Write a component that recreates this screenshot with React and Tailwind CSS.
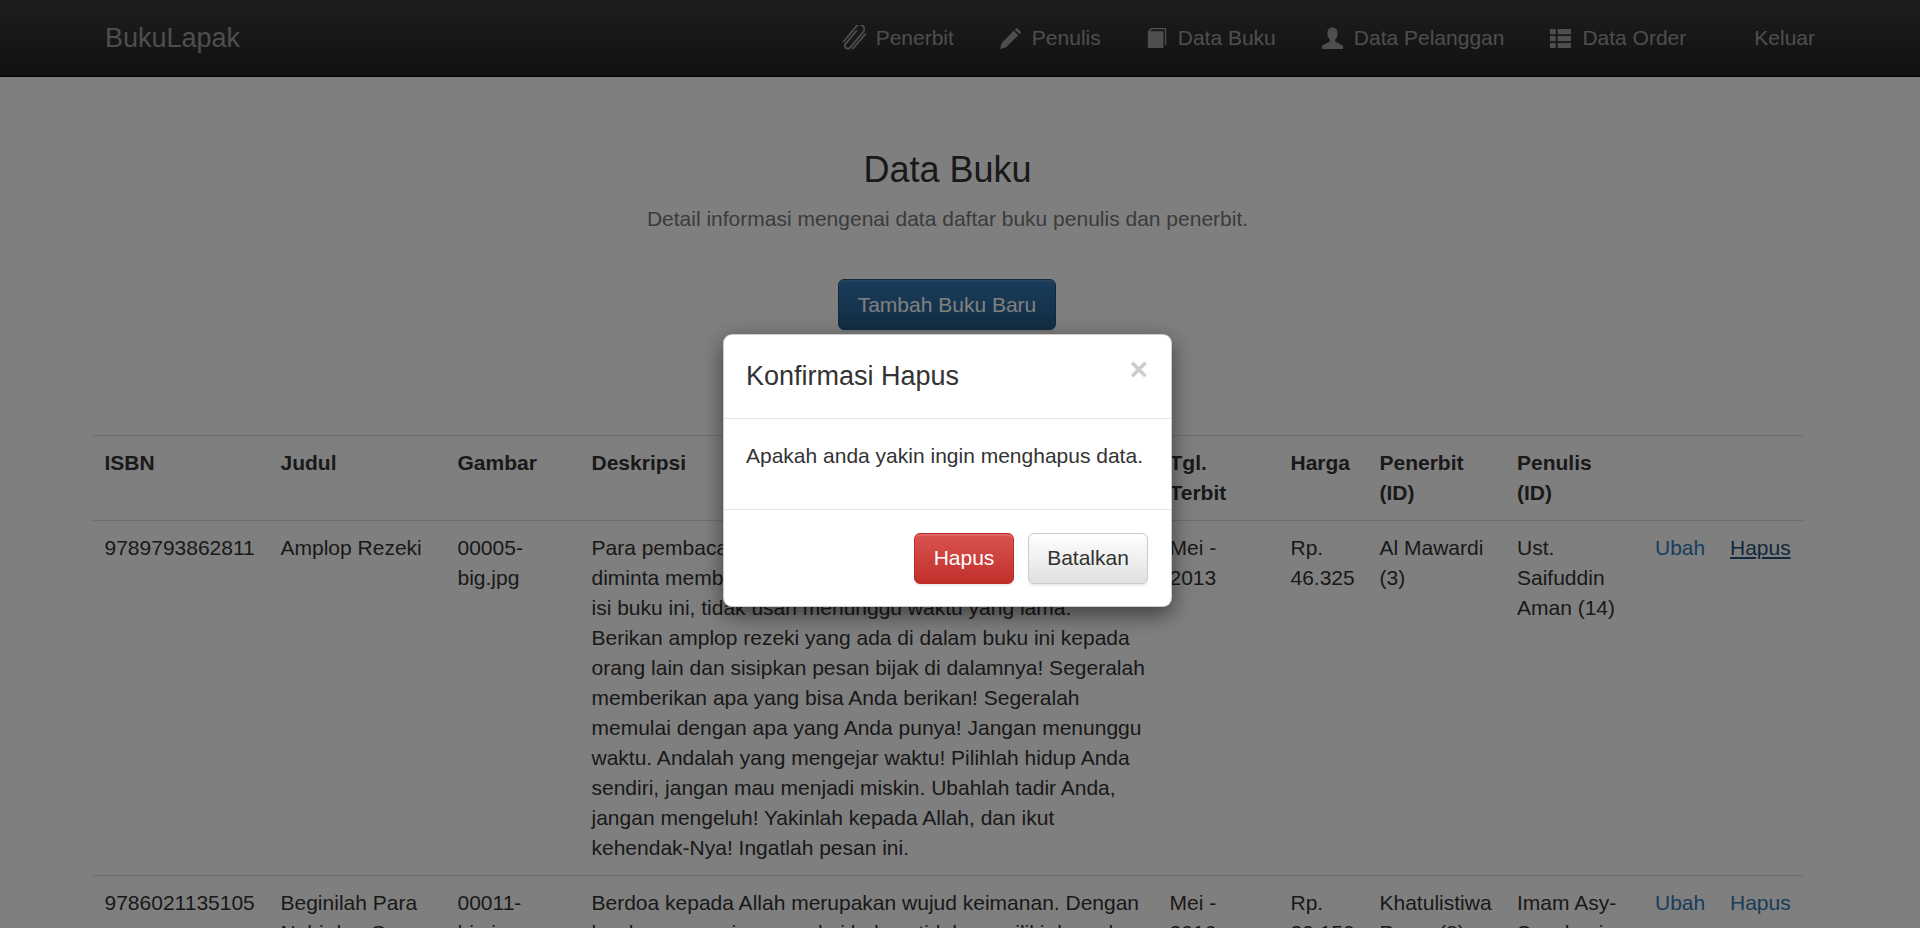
import React from "react";

const PaperclipIcon = () => (
  <svg viewBox="1.500 1.500 21 21" className="-ml-[2px] -mr-[1px] w-[26px] h-[26px]" fill="none" stroke="currentColor" strokeWidth="1.450" strokeLinecap="round">
    <g transform="rotate(40 12 12)">
      <path d="M9.8 6.5V20a2.4 2.4 0 0 0 4.8 0V3.500a3.600 3.600 0 0 0-7.200 0V19.500" />
      <path d="M16.900 4v15" />
    </g>
  </svg>
);

const PencilIcon = () => (
  <svg viewBox="0 0 24 24" className="w-[23px] h-[23px]" fill="currentColor">
    <path d="M1 23l1.8-6.4L15.4 4l4.6 4.6L7.400 21.200z" />
    <path d="M16.600 2.800l2-2 4.600 4.600-2 2z" />
  </svg>
);

const BookIcon = () => (
  <svg viewBox="0 0 24 24" className="w-[22px] h-[22px]" fill="currentColor">
    <path d="M2 4.500L5.500 1H22v18.500h-1.400V2.400H6.300L4.800 4.500H19V23H2z" />
  </svg>
);

const UserIcon = () => (
  <svg viewBox="0 0 24 24" className="w-[23px] h-[23px]" fill="currentColor">
    <path d="M12 .5c-3.600 0-5.300 2.600-5.300 6.200 0 2.600 1 5.100 2.500 6.500v1.800L1 19.500V23h22v-3.500l-8.200-4.500v-1.800c1.500-1.400 2.500-3.900 2.500-6.500C17.300 3.100 15.600.5 12 .5z" />
  </svg>
);

const ListIcon = () => (
  <svg viewBox="0 0 24 24" className="w-[23px] h-[23px]" fill="currentColor">
    <path d="M1 2h6v5.500H1zM9 2h14v5.500H9zM1 9.300h6v5.500H1zM9 9.300h14v5.500H9zM1 16.600h6V22H1zM9 16.600h14V22H9z" />
  </svg>
);

const navItems = [
  { label: "Penerbit", icon: <PaperclipIcon /> },
  { label: "Penulis", icon: <PencilIcon /> },
  { label: "Data Buku", icon: <BookIcon /> },
  { label: "Data Pelanggan", icon: <UserIcon /> },
  { label: "Data Order", icon: <ListIcon /> },
];

const rows = [
  {
    isbn: "9789793862811",
    judul: "Amplop Rezeki",
    gambar: "00005-big.jpg",
    deskripsi:
      "Para pembaca yang dirahmati Allah, setelah buku selesai diminta memberikan amplop kepada banyak orang. Maka isi buku ini, tidak usah menunggu waktu yang lama. Berikan amplop rezeki yang ada di dalam buku ini kepada orang lain dan sisipkan pesan bijak di dalamnya! Segeralah memberikan apa yang bisa Anda berikan! Segeralah memulai dengan apa yang Anda punya! Jangan menunggu waktu. Andalah yang mengejar waktu! Pilihlah hidup Anda sendiri, jangan mau menjadi miskin. Ubahlah tadir Anda, jangan mengeluh! Yakinlah kepada Allah, dan ikut kehendak-Nya! Ingatlah pesan ini.",
    terbit: "Mei - 2013",
    harga: "Rp. 46.325",
    penerbit: "Al Mawardi (3)",
    penulis: "Ust. Saifuddin Aman (14)",
    hover: true,
  },
  {
    isbn: "9786021135105",
    judul: "Beginilah Para Nabi dan Orang Saleh Berdoa",
    gambar: "00011-big.jpg",
    deskripsi:
      "Berdoa kepada Allah merupakan wujud keimanan. Dengan berdoa, manusia mengakui bahwa tidak memiliki daya dan upaya selain dari pertolongan Allah.",
    terbit: "Mei - 2016",
    harga: "Rp. 39.150",
    penerbit: "Khatulistiwa Press (8)",
    penulis: "Imam Asy-Syaukani (1)",
  },
];

const App = () => {
  return (
    <div className="relative h-[928px] w-[1920px] overflow-hidden bg-white text-[21px] leading-[30px] text-[#333] font-['Liberation_Sans',Arial,sans-serif]">
      {/* Navbar */}
      <nav className="flex h-[77px] items-center border-b border-[#080808] bg-gradient-to-b from-[#3c3c3c] to-[#222] pl-[105px] pr-[82.5px] text-[#9d9d9d]">
        <span className="text-[27px]">BukuLapak</span>
        <ul className="ml-auto flex items-center">
          {navItems.map((item) => (
            <li key={item.label} className="flex items-center gap-[10px] px-[22.5px]">
              {item.icon}
              <span>{item.label}</span>
            </li>
          ))}
          <li className="ml-[23px] px-[22.5px]">Keluar</li>
        </ul>
      </nav>

      {/* Content */}
      <main className="w-[1895px]">
        <div className="mx-auto w-[1710px]">
          <div className="pt-[73px] text-center">
            <h3 className="text-[36px] leading-[40px]">Data Buku</h3>
            <p className="mt-[14px] text-[#777]">Detail informasi mengenai data daftar buku penulis dan penerbit.</p>
            <button className="mr-[1px] mt-[45px] h-[51px] w-[218px] rounded-[6px] border border-[#245580] bg-gradient-to-b from-[#337ab7] to-[#265a88] text-white shadow-[inset_0_1.5px_0_rgba(255,255,255,0.15),0_1.5px_1.5px_rgba(0,0,0,0.075)]">
              Tambah Buku Baru
            </button>
          </div>

          <table className="mt-[105px] w-full table-fixed border-t border-[#ddd] text-left">
            <thead>
              <tr className="border-b border-[#ddd] font-bold">
                <th className="w-[176px] p-3 align-top">ISBN</th>
                <th className="w-[177px] p-3 align-top">Judul</th>
                <th className="w-[134px] p-3 align-top">Gambar</th>
                <th className="w-[578px] p-3 align-top">Deskripsi</th>
                <th className="w-[121px] p-3 align-top">Tgl. Terbit</th>
                <th className="w-[89px] p-3 align-top">Harga</th>
                <th className="w-[137.5px] p-3 align-top">Penerbit (ID)</th>
                <th className="w-[138px] p-3 align-top">Penulis (ID)</th>
                <th className="w-[75px] p-3"></th>
                <th className="p-3"></th>
              </tr>
            </thead>
            <tbody>
              {rows.map((row) => (
                <tr key={row.isbn} className="border-b border-[#ddd]">
                  <td className="p-3 align-top">{row.isbn}</td>
                  <td className="p-3 align-top">{row.judul}</td>
                  <td className="p-3 align-top">{row.gambar}</td>
                  <td className="p-3 align-top">{row.deskripsi}</td>
                  <td className="p-3 align-top">{row.terbit}</td>
                  <td className="p-3 align-top">{row.harga}</td>
                  <td className="p-3 align-top">{row.penerbit}</td>
                  <td className="p-3 align-top">{row.penulis}</td>
                  <td className="p-3 align-top text-[#337ab7]">Ubah</td>
                  <td className={row.hover ? "p-3 align-top text-[#23527c] underline" : "p-3 align-top text-[#337ab7]"}>Hapus</td>
                </tr>
              ))}
            </tbody>
          </table>
        </div>
      </main>

      {/* Modal */}
      <div className="absolute inset-0 bg-black/50 pr-[26px] pt-[334px]">
        <div className="mx-auto w-[449px] rounded-[9px] border border-black/20 bg-white shadow-[0_7.5px_22.5px_rgba(0,0,0,0.5)]">
          <div className="flex items-start justify-between border-b border-[#e5e5e5] px-[22.5px] pb-[22px] pt-[22px]">
            <h4 className="text-[27px] leading-[38.5px]">Konfirmasi Hapus</h4>
            <span className="mt-[-3px] text-[31.5px] font-bold leading-[31.5px] text-[#ccc]">×</span>
          </div>
          <div className="px-[22.5px] pb-[37.5px] pt-[22.5px]">Apakah anda yakin ingin menghapus data.</div>
          <div className="flex justify-end gap-[14px] border-t border-[#e5e5e5] px-[22.5px] pb-[22px] pt-[23px]">
            <button className="h-[51px] w-[100px] rounded-[6px] border border-[#b92c28] bg-gradient-to-b from-[#d9534f] to-[#c12e2a] text-white shadow-[inset_0_1.5px_0_rgba(255,255,255,0.15),0_1.5px_1.5px_rgba(0,0,0,0.075)]">
              Hapus
            </button>
            <button className="h-[51px] w-[120px] rounded-[6px] border border-[#ccc] bg-gradient-to-b from-white to-[#e0e0e0] text-[#333] shadow-[inset_0_1.5px_0_rgba(255,255,255,0.15),0_1.5px_1.5px_rgba(0,0,0,0.075)]">
              Batalkan
            </button>
          </div>
        </div>
      </div>
    </div>
  );
};

export default App;
